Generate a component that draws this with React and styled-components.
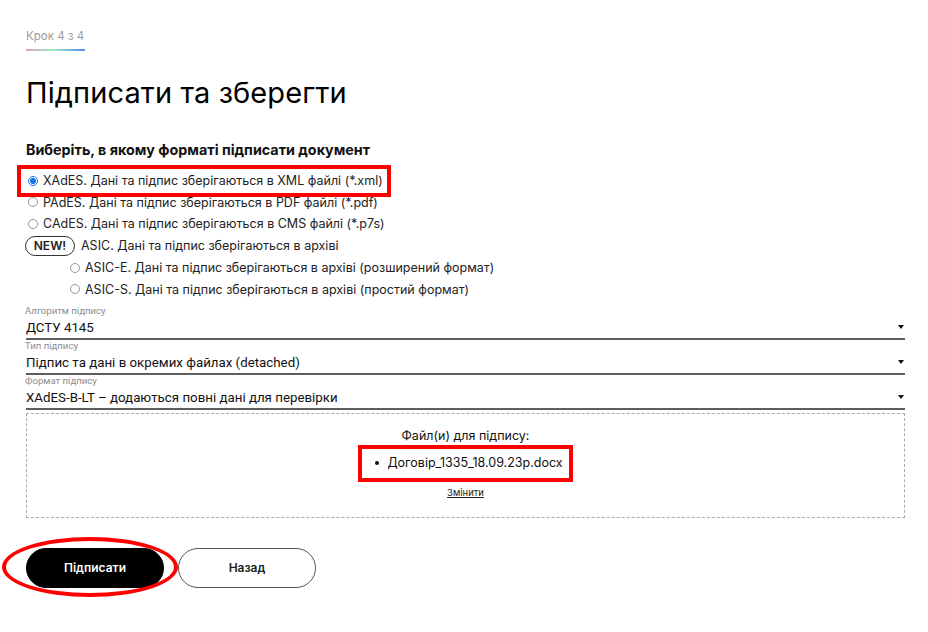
import React from "react";
import styled, { createGlobalStyle } from "styled-components";

const Global = createGlobalStyle`
  html, body { margin: 0; padding: 0; background: #fff; }
  body { font-family: "Inter", "Noto Sans", sans-serif; color: #111; }
  * { box-sizing: border-box; }
`;

const Page = styled.div`
  width: 928px;
  height: 632px;
  padding: 24px 23px 0 26px;
  overflow: hidden;
`;

const Step = styled.div`
  display: inline-flex;
  flex-direction: column;
  gap: 6px;
  font-size: 11.5px;
  color: #9a9a9a;
  line-height: 14px;
`;

const StepBar = styled.div`
  width: 59px;
  height: 2px;
  background: linear-gradient(90deg, #d9a6b8 0%, #9ee6c4 45%, #4f8ff5 100%);
`;

const Title = styled.h1`
  margin: 24px 0 0;
  font-size: 29px;
  font-weight: 400;
  line-height: 36px;
  letter-spacing: 0.1px;
  color: #000;
`;

const Heading = styled.div`
  margin-top: 30px;
  font-size: 14.3px;
  font-weight: 700;
  line-height: 18px;
  color: #111;
`;

const Options = styled.div`
  display: flex;
  flex-direction: column;
  margin-top: 11px;
`;

const OptionRow = styled.label`
  display: flex;
  align-items: center;
  gap: 5px;
  height: 21.6px;
  padding-left: ${(p) => p.$indent || 2}px;
  font-size: 12.5px;
  color: #222;
  width: fit-content;
  ${(p) =>
    p.$marked &&
    `outline: 4px solid #f00; outline-offset: 1px; padding-right: 3px; margin-left: -4px; padding-left: 6px;`}
`;

const Radio = styled.span`
  width: 10px;
  height: 10px;
  border-radius: 50%;
  border: 1px solid ${(p) => (p.$checked ? "#1a73e8" : "#9a9a9a")};
  background: ${(p) => (p.$checked ? "radial-gradient(circle, #1a73e8 0 2.8px, #fff 3.2px)" : "#fff")};
  flex: none;
`;

const NewRow = styled.div`
  display: flex;
  align-items: center;
  gap: 6px;
  height: 22px;
  font-size: 12.5px;
  color: #222;
`;

const NewBadge = styled.span`
  display: inline-flex;
  align-items: center;
  justify-content: center;
  width: 50px;
  height: 20px;
  border: 1px solid #333;
  border-radius: 10px;
  font-size: 12px;
  font-weight: 600;
  color: #222;
  margin-left: -1px;
`;

const Selects = styled.div`
  display: flex;
  flex-direction: column;
  margin-top: 5px;
`;

const Field = styled.div`
  display: flex;
  flex-direction: column;
  font-family: "Roboto", sans-serif;
`;

const FieldLabel = styled.div`
  font-size: 9.6px;
  line-height: 12px;
  color: #8c8c8c;
  margin-left: -1px;
`;

const FieldValue = styled.div`
  display: flex;
  align-items: center;
  justify-content: space-between;
  height: 23px;
  border-bottom: 2px solid #5e5e5e;
  font-size: 13.3px;
  color: #111;
  padding-right: 1px;
`;

const Caret = styled.span`
  width: 0;
  height: 0;
  border-left: 3px solid transparent;
  border-right: 3px solid transparent;
  border-top: 4px solid #111;
`;

const Drop = styled.div`
  margin-top: 3px;
  height: 105px;
  border: 1px dashed #ababab;
  display: flex;
  flex-direction: column;
  align-items: center;
  padding-top: 14px;
  font-size: 12.5px;
  color: #111;
`;

const DropTitle = styled.div`
  line-height: 16px;
`;

const FileBox = styled.div`
  margin-top: 3px;
  padding: 0 8px 0 15px;
  outline: 4px solid #f00;
  outline-offset: -2px;
  display: flex;
  align-items: center;
  gap: 8px;
  height: 33px;
  line-height: 16px;
  font-size: 12.5px;
`;

const Bullet = styled.span`
  width: 4px;
  height: 4px;
  border-radius: 50%;
  background: #111;
`;

const ChangeLink = styled.a`
  margin-top: 7px;
  font-size: 9.5px;
  color: #222;
  text-decoration: underline;
`;

const Buttons = styled.div`
  display: flex;
  gap: 14px;
  margin-top: 30px;
`;

const ButtonWrap = styled.div`
  position: relative;
`;

const Button = styled.button`
  width: 138px;
  height: 40px;
  border-radius: 20px;
  font-family: "Inter", sans-serif;
  font-size: 12px;
  font-weight: 600;
  border: 1px solid ${(p) => (p.$primary ? "#000" : "#555")};
  background: ${(p) => (p.$primary ? "#000" : "#fff")};
  color: ${(p) => (p.$primary ? "#fff" : "#222")};
`;

const Ellipse = styled.span`
  position: absolute;
  left: -24px;
  top: -11px;
  width: 176px;
  height: 60px;
  border: 4px solid #f00;
  border-radius: 50%;
  pointer-events: none;
`;

const options = [
  { text: "XAdES. Дані та підпис зберігаються в XML файлі (*.xml)", checked: true, marked: true },
  { text: "PAdES. Дані та підпис зберігаються в PDF файлі (*.pdf)" },
  { text: "CAdES. Дані та підпис зберігаються в CMS файлі (*.p7s)" },
];

const asic = [
  "ASIC-E. Дані та підпис зберігаються в архіві (розширений формат)",
  "ASIC-S. Дані та підпис зберігаються в архіві (простий формат)",
];

const fields = [
  { label: "Алгоритм підпису", value: "ДСТУ 4145" },
  { label: "Тип підпису", value: "Підпис та дані в окремих файлах (detached)" },
  { label: "Формат підпису", value: "XAdES-B-LT – додаються повні дані для перевірки" },
];

export default function App() {
  return (
    <Page>
      <Global />
      <Step>
        Крок 4 з 4
        <StepBar />
      </Step>
      <Title>Підписати та зберегти</Title>
      <Heading>Виберіть, в якому форматі підписати документ</Heading>
      <Options>
        {options.map((o) => (
          <OptionRow key={o.text} $marked={o.marked}>
            <Radio $checked={o.checked} />
            {o.text}
          </OptionRow>
        ))}
        <NewRow>
          <NewBadge>NEW!</NewBadge>
          ASIC. Дані та підпис зберігаються в архіві
        </NewRow>
        {asic.map((t) => (
          <OptionRow key={t} $indent={44}>
            <Radio />
            {t}
          </OptionRow>
        ))}
      </Options>
      <Selects>
        {fields.map((f) => (
          <Field key={f.label}>
            <FieldLabel>{f.label}</FieldLabel>
            <FieldValue>
              {f.value}
              <Caret />
            </FieldValue>
          </Field>
        ))}
      </Selects>
      <Drop>
        <DropTitle>Файл(и) для підпису:</DropTitle>
        <FileBox>
          <Bullet />
          Договір_1335_18.09.23р.docx
        </FileBox>
        <ChangeLink>Змінити</ChangeLink>
      </Drop>
      <Buttons>
        <ButtonWrap>
          <Button $primary>Підписати</Button>
          <Ellipse />
        </ButtonWrap>
        <Button>Назад</Button>
      </Buttons>
    </Page>
  );
}
